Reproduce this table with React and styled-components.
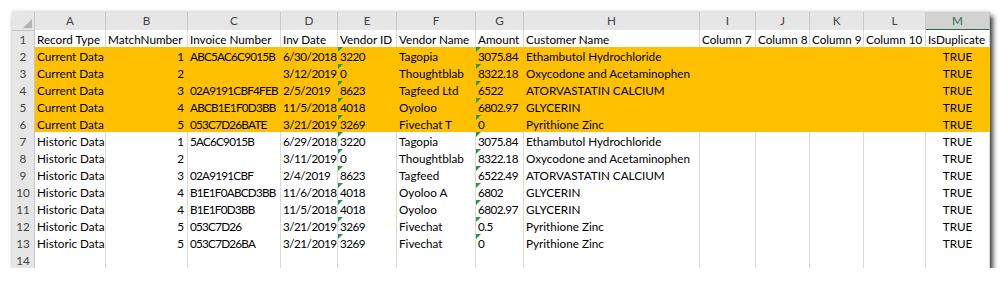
import React from "react";
import styled, { createGlobalStyle } from "styled-components";

const Global = createGlobalStyle`
  html, body { margin: 0; padding: 0; background: #ffffff; }
  body { font-family: Lato, "Open Sans", sans-serif; }
`;

const COLS = "23px 71px 82px 93px 57px 59px 79px 48px 176px 56px 54px 54px 62px 64px";
const FS = "11.7px";

const Page = styled.div`
  padding: 12px 0 0 12px;
`;

const Sheet = styled.div`
  width: 978px;
  display: flex;
  flex-direction: column;
  background: #fff;
  box-shadow: 3px 4px 5px rgba(0, 0, 0, 0.75), 0 -1px 4px rgba(0, 0, 0, 0.12);
`;

const Row = styled.div`
  display: grid;
  grid-template-columns: ${COLS};
  height: ${(p) => (p.$head ? 18 : 17)}px;
`;

const Corner = styled.div`
  background: #e6e6e6;
  border-right: 1px solid #c6c6c6;
  border-bottom: 1px solid #c6c6c6;
  position: relative;
  box-sizing: border-box;
`;

const CornerMark = styled.svg`
  position: absolute;
  right: 2px;
  bottom: 2px;
`;

const ColHead = styled.div`
  box-sizing: border-box;
  background: ${(p) => (p.$sel ? "#d2d2d2" : "#e6e6e6")};
  border-right: 1px solid ${(p) => (p.$sel ? "#bdbdbd" : "#c9c9c9")};
  border-bottom: ${(p) => (p.$sel ? "2px solid #217346" : "1px solid #c6c6c6")};
  color: ${(p) => (p.$sel ? "#217346" : "#444")};
  font-size: ${FS};
  text-align: center;
  line-height: 17px;
`;

const RowHead = styled.div`
  box-sizing: border-box;
  background: #e6e6e6;
  border-right: 1px solid #c6c6c6;
  border-bottom: 1px solid #d0d0d0;
  color: #444;
  font-size: ${FS};
  text-align: center;
  padding-top: 1px;
  line-height: 16px;
`;

const Cell = styled.div`
  position: relative;
  box-sizing: border-box;
  background: ${(p) => (p.$hl ? "#ffc000" : "#ffffff")};
  border-right: 1px solid ${(p) => (p.$hl ? "#ffc000" : "#dadada")};
  border-bottom: 1px solid ${(p) => (p.$hl ? "#ffc000" : "#dadada")};
  color: #000;
  font-size: ${FS};
  padding-top: 1px;
  line-height: 16px;
  letter-spacing: ${(p) => p.$ls || 0}px;
  padding-left: 2px;
  padding-right: ${(p) => (p.$align === "right" ? 3 : 2)}px;
  text-align: ${(p) => p.$align || "left"};
  white-space: nowrap;
  overflow: hidden;
`;

const ErrFlag = styled.span`
  position: absolute;
  left: 0;
  top: 0;
  width: 0;
  height: 0;
  border-top: 5px solid #219a45;
  border-right: 5px solid transparent;
`;

const headers = ["A", "B", "C", "D", "E", "F", "G", "H", "I", "J", "K", "L", "M"];
const titles = [
  "Record Type", "MatchNumber", "Invoice Number", "Inv Date", "Vendor ID", "Vendor Name",
  "Amount", "Customer Name", "Column 7", "Column 8", "Column 9", "Column 10", "IsDuplicate",
];

const data = [
  ["Current Data", 1, "ABC5AC6C9015B", "6/30/2018", "3220", "Tagopia", "3075.84", "Ethambutol Hydrochloride"],
  ["Current Data", 2, "", "3/12/2019", "0", "Thoughtblab", "8322.18", "Oxycodone and Acetaminophen"],
  ["Current Data", 3, "02A9191CBF4FEB", "2/5/2019", "8623", "Tagfeed Ltd", "6522", "ATORVASTATIN CALCIUM"],
  ["Current Data", 4, "ABCB1E1F0D3BB", "11/5/2018", "4018", "Oyoloo", "6802.97", "GLYCERIN"],
  ["Current Data", 5, "053C7D26BATE", "3/21/2019", "3269", "Fivechat T", "0", "Pyrithione Zinc"],
  ["Historic Data", 1, "5AC6C9015B", "6/29/2018", "3220", "Tagopia", "3075.84", "Ethambutol Hydrochloride"],
  ["Historic Data", 2, "", "3/11/2019", "0", "Thoughtblab", "8322.18", "Oxycodone and Acetaminophen"],
  ["Historic Data", 3, "02A9191CBF", "2/4/2019", "8623", "Tagfeed", "6522.49", "ATORVASTATIN CALCIUM"],
  ["Historic Data", 4, "B1E1F0ABCD3BB", "11/6/2018", "4018", "Oyoloo A", "6802", "GLYCERIN"],
  ["Historic Data", 4, "B1E1F0D3BB", "11/5/2018", "4018", "Oyoloo", "6802.97", "GLYCERIN"],
  ["Historic Data", 5, "053C7D26", "3/21/2019", "3269", "Fivechat", "0.5", "Pyrithione Zinc"],
  ["Historic Data", 5, "053C7D26BA", "3/21/2019", "3269", "Fivechat", "0", "Pyrithione Zinc"],
];

export default function App() {
  return (
    <Page>
      <Global />
      <Sheet>
        <Row $head>
          <Corner>
            <CornerMark width="9" height="9" viewBox="0 0 9 9">
              <polygon points="9,0 9,9 0,9" fill="#b4b4b4" />
            </CornerMark>
          </Corner>
          {headers.map((h) => (
            <ColHead key={h} $sel={h === "M"}>{h}</ColHead>
          ))}
        </Row>
        <Row>
          <RowHead>1</RowHead>
          {titles.map((t) => (
            <Cell key={t}>{t}</Cell>
          ))}
        </Row>
        {data.map((r, i) => {
          const hl = i < 5;
          const [rt, mn, inv, dt, vid, vn, amt, cust] = r;
          return (
            <Row key={i}>
              <RowHead>{i + 2}</RowHead>
              <Cell $hl={hl}>{rt}</Cell>
              <Cell $hl={hl} $align="right">{mn}</Cell>
              <Cell $hl={hl} $ls={-0.75}>{inv}</Cell>
              <Cell $hl={hl} $ls={-0.5}>{dt}</Cell>
              <Cell $hl={hl} $ls={-0.5}><ErrFlag />{vid}</Cell>
              <Cell $hl={hl}>{vn}</Cell>
              <Cell $hl={hl} $ls={-0.5}><ErrFlag />{amt}</Cell>
              <Cell $hl={hl}>{cust}</Cell>
              <Cell $hl={hl} />
              <Cell $hl={hl} />
              <Cell $hl={hl} />
              <Cell $hl={hl} />
              <Cell $hl={hl} $align="center">TRUE</Cell>
            </Row>
          );
        })}
        <Row>
          <RowHead>14</RowHead>
          {headers.map((h) => (
            <Cell key={h} />
          ))}
        </Row>
      </Sheet>
    </Page>
  );
}
